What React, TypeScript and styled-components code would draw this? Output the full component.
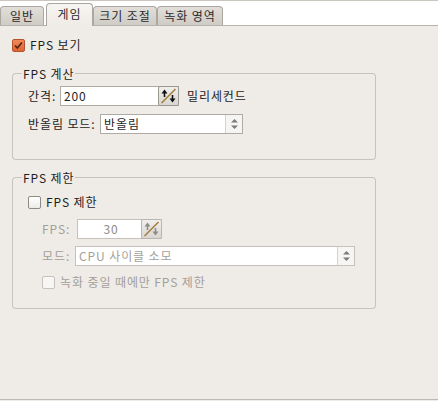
import styled, { createGlobalStyle } from 'styled-components';

const GlobalStyle = createGlobalStyle`
  html, body {
    margin: 0;
    padding: 0;
    background: #efebe6;
  }
  body {
    font-family: "Noto Sans CJK KR", "Noto Sans", sans-serif;
    font-size: 12px;
    letter-spacing: 0.9px;
    color: #1e1e1e;
  }
  * {
    box-sizing: border-box;
  }
`;

const Window = styled.div`
  width: 438px;
  height: 400px;
  display: flex;
  flex-direction: column;
  background: #efebe6;
  border-bottom: 1px solid #bcb8b2;
`;

const TabBar = styled.div`
  height: 26px;
  display: flex;
  align-items: flex-end;
  background: #ffffff;
  border-top: 1px solid #c9c5bf;
  border-bottom: 1px solid #b6b2ac;
`;

const Tab = styled.div<{ $active?: boolean; $width: number; $gap?: number }>`
  width: ${(p) => p.$width}px;
  margin-left: ${(p) => p.$gap ?? 0}px;
  height: ${(p) => (p.$active ? 23 : 19)}px;
  margin-bottom: ${(p) => (p.$active ? -1 : 0)}px;
  position: relative;
  z-index: ${(p) => (p.$active ? 1 : 0)};
  display: flex;
  align-items: center;
  justify-content: center;
  border: 1px solid #aaa6a0;
  border-bottom: none;
  border-radius: 4px 4px 0 0;
  background: ${(p) =>
    p.$active
      ? 'linear-gradient(#f7f5f2, #efebe6)'
      : 'linear-gradient(#e2dfda, #cfcbc5)'};
  color: #2a2a2a;
  line-height: 14px;
  padding-bottom: ${(p) => (p.$active ? 3 : 0)}px;
`;

const Content = styled.div`
  padding: 11px 0 0 12px;
  display: flex;
  flex-direction: column;
`;

const CheckRow = styled.label<{ $indent?: number; $top?: number; $disabled?: boolean }>`
  height: 16px;
  display: flex;
  align-items: center;
  gap: 5px;
  margin-left: ${(p) => p.$indent ?? 0}px;
  margin-top: ${(p) => p.$top ?? 0}px;
  color: ${(p) => (p.$disabled ? '#a39f9a' : '#1e1e1e')};
  line-height: 14px;
`;

const Box = styled.span<{ $checked?: boolean; $disabled?: boolean }>`
  width: 13px;
  height: 13px;
  flex: none;
  display: flex;
  align-items: center;
  justify-content: center;
  border-radius: 2px;
  border: 1px solid
    ${(p) => (p.$checked ? '#b4542b' : p.$disabled ? '#c6c2bd' : '#8e8a85')};
  background: ${(p) =>
    p.$checked
      ? 'linear-gradient(#f08a58, #dc6534)'
      : p.$disabled
      ? '#f7f6f4'
      : 'linear-gradient(#ffffff, #ecebe8)'};
`;

const Group = styled.section<{ $top: number }>`
  width: 364px;
  margin-top: ${(p) => p.$top}px;
  display: flex;
  flex-direction: column;
`;

const GroupHeader = styled.div`
  height: 14px;
  display: flex;
  align-items: center;
  line-height: 14px;
  &::before,
  &::after {
    content: '';
    height: 7px;
    align-self: flex-end;
    border-top: 1px solid #c7c3be;
  }
  &::before {
    width: 9px;
    border-left: 1px solid #c7c3be;
    border-top-left-radius: 4px;
  }
  &::after {
    flex: 1;
    border-right: 1px solid #c7c3be;
    border-top-right-radius: 4px;
  }
`;

const GroupTitle = styled.span`
  padding: 0 1px;
  color: #1e1e1e;
`;

const GroupBody = styled.div<{ $bottom: number }>`
  display: flex;
  flex-direction: column;
  padding: 0 0 ${(p) => p.$bottom}px 15px;
  border: 1px solid #c7c3be;
  border-top: none;
  border-radius: 0 0 4px 4px;
`;

const Row = styled.div<{ $top?: number; $indent?: number }>`
  height: 20px;
  display: flex;
  align-items: center;
  margin-top: ${(p) => p.$top ?? 0}px;
  margin-left: ${(p) => p.$indent ?? 0}px;
`;

const Label = styled.span<{ $width: number; $disabled?: boolean }>`
  width: ${(p) => p.$width}px;
  flex: none;
  color: ${(p) => (p.$disabled ? '#a39f9a' : '#1e1e1e')};
  line-height: 14px;
  white-space: nowrap;
`;

const Suffix = styled.span`
  margin-left: 8px;
  line-height: 14px;
`;

const Field = styled.div<{ $width: number; $disabled?: boolean }>`
  width: ${(p) => p.$width}px;
  height: 20px;
  display: flex;
  background: #ffffff;
  border: 1px solid ${(p) => (p.$disabled ? '#c5c1bc' : '#aeaaa4')};
  border-right: none;
`;

const FieldText = styled.span<{ $center?: boolean; $disabled?: boolean }>`
  flex: 1;
  padding-left: 3px;
  line-height: 18px;
  text-align: ${(p) => (p.$center ? 'center' : 'left')};
  color: ${(p) => (p.$disabled ? '#8f8b86' : '#1e1e1e')};
`;

const SpinButton = styled.span<{ $disabled?: boolean }>`
  width: 21px;
  height: 20px;
  margin-top: -1px;
  flex: none;
  border: 1px solid ${(p) => (p.$disabled ? '#b9b5b0' : '#9b9791')};
  border-radius: 2px;
  background: linear-gradient(#f1efec, #d9d6d1);
  display: flex;
`;

const ComboBox = styled.div<{ $width: number; $disabled?: boolean }>`
  width: ${(p) => p.$width}px;
  height: 20px;
  display: flex;
  background: #ffffff;
  border: 1px solid ${(p) => (p.$disabled ? '#c5c1bc' : '#aeaaa4')};
`;

const ComboText = styled.span<{ $disabled?: boolean }>`
  flex: 1;
  padding-left: 3px;
  line-height: 18px;
  color: ${(p) => (p.$disabled ? '#a39f9a' : '#1e1e1e')};
`;

const ComboArrow = styled.span`
  width: 17px;
  flex: none;
  border-left: 1px solid #d6d2cd;
  background: #f6f5f3;
  display: flex;
  align-items: center;
  justify-content: center;
`;

const CheckMark = () => (
  <svg width="11" height="11" viewBox="0 0 11 11">
    <path d="M2 5.5 L4.3 8 L9 2.5" fill="none" stroke="#5a2410" strokeWidth="1.8" />
  </svg>
);

const Check = ({
  checked,
  disabled,
  text,
  indent,
  top,
}: {
  checked?: boolean;
  disabled?: boolean;
  text: string;
  indent?: number;
  top?: number;
}) => (
  <CheckRow $indent={indent} $top={top} $disabled={disabled}>
    <Box $checked={checked} $disabled={disabled}>
      {checked && <CheckMark />}
    </Box>
    {text}
  </CheckRow>
);

const SpinIcon = ({ disabled }: { disabled?: boolean }) => {
  const arrow = disabled ? '#8e8c89' : '#111111';
  return (
    <svg width="19" height="18" viewBox="0 0 19 18">
      <line x1="2.5" y1="16" x2="16.5" y2="2" stroke="#a3813c" strokeWidth="1.6" />
      <line x1="5.5" y1="6" x2="5.5" y2="10" stroke={arrow} strokeWidth="1.6" />
      <polygon points="2.5,6.5 5.5,2.5 8.5,6.5" fill={arrow} />
      <line x1="13.5" y1="8" x2="13.5" y2="12" stroke={arrow} strokeWidth="1.6" />
      <polygon points="10.5,11.5 13.5,15.5 16.5,11.5" fill={arrow} />
    </svg>
  );
};

const UpDown = () => (
  <svg width="9" height="12" viewBox="0 0 9 12">
    <polygon points="1,4.5 4.5,1 8,4.5" fill="#7d7b78" />
    <polygon points="1,7.5 4.5,11 8,7.5" fill="#7d7b78" />
  </svg>
);

const SpinBox = ({
  value,
  width,
  disabled,
  center,
}: {
  value: string;
  width: number;
  disabled?: boolean;
  center?: boolean;
}) => (
  <Field $width={width} $disabled={disabled}>
    <FieldText $center={center} $disabled={disabled}>
      {value}
    </FieldText>
    <SpinButton $disabled={disabled}>
      <SpinIcon disabled={disabled} />
    </SpinButton>
  </Field>
);

const Combo = ({
  value,
  width,
  disabled,
}: {
  value: string;
  width: number;
  disabled?: boolean;
}) => (
  <ComboBox $width={width} $disabled={disabled}>
    <ComboText $disabled={disabled}>{value}</ComboText>
    <ComboArrow>
      <UpDown />
    </ComboArrow>
  </ComboBox>
);

export default function App() {
  return (
    <Window>
      <GlobalStyle />
      <TabBar>
        <Tab $width={44}>일반</Tab>
        <Tab $width={47} $gap={2} $active>
          게임
        </Tab>
        <Tab $width={64}>크기 조절</Tab>
        <Tab $width={66}>녹화 영역</Tab>
      </TabBar>
      <Content>
        <Check checked text="FPS 보기" />

        <Group $top={14}>
          <GroupHeader>
            <GroupTitle>FPS 계산</GroupTitle>
          </GroupHeader>
          <GroupBody $bottom={25}>
            <Row $top={5}>
              <Label $width={32}>간격:</Label>
              <SpinBox value="200" width={119} />
              <Suffix>밀리세컨드</Suffix>
            </Row>
            <Row $top={8}>
              <Label $width={72}>반올림 모드:</Label>
              <Combo value="반올림" width={143} />
            </Row>
          </GroupBody>
        </Group>

        <Group $top={11}>
          <GroupHeader>
            <GroupTitle>FPS 제한</GroupTitle>
          </GroupHeader>
          <GroupBody $bottom={18}>
            <Check text="FPS 제한" top={9} />
            <Row $top={9} $indent={14}>
              <Label $width={35} $disabled>
                FPS:
              </Label>
              <SpinBox value="30" width={85} disabled center />
            </Row>
            <Row $top={7} $indent={14}>
              <Label $width={33} $disabled>
                모드:
              </Label>
              <Combo value="CPU 사이클 소모" width={280} disabled />
            </Row>
            <Check text="녹화 중일 때에만 FPS 제한" indent={14} top={8} disabled />
          </GroupBody>
        </Group>
      </Content>
    </Window>
  );
}
